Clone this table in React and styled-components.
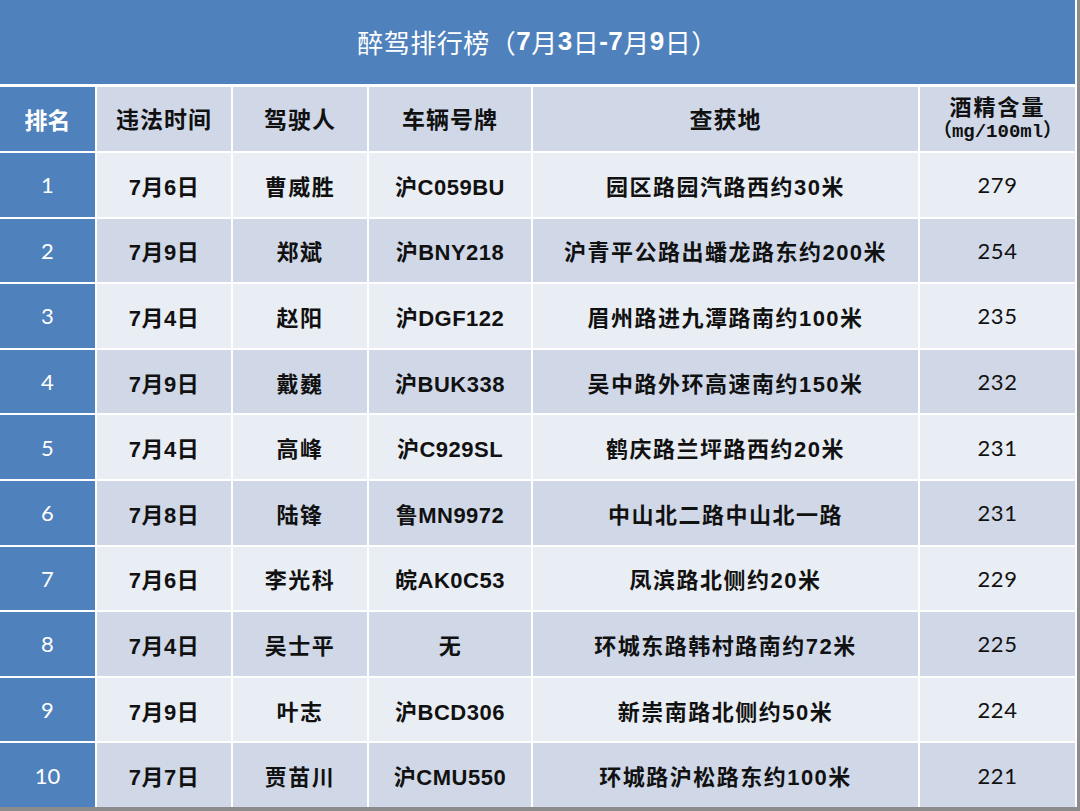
import styled, { createGlobalStyle } from "styled-components";

const GlobalStyle = createGlobalStyle`
  html, body {
    margin: 0;
    padding: 0;
    background: #8c8c8c;
  }
  body {
    font-family: "Noto Sans CJK SC", sans-serif;
  }
`;

const rows = [
  ["1", "7月6日", "曹威胜", "沪C059BU", "园区路园汽路西约30米", "279"],
  ["2", "7月9日", "郑斌", "沪BNY218", "沪青平公路出蟠龙路东约200米", "254"],
  ["3", "7月4日", "赵阳", "沪DGF122", "眉州路进九潭路南约100米", "235"],
  ["4", "7月9日", "戴巍", "沪BUK338", "吴中路外环高速南约150米", "232"],
  ["5", "7月4日", "高峰", "沪C929SL", "鹤庆路兰坪路西约20米", "231"],
  ["6", "7月8日", "陆锋", "鲁MN9972", "中山北二路中山北一路", "231"],
  ["7", "7月6日", "李光科", "皖AK0C53", "凤滨路北侧约20米", "229"],
  ["8", "7月4日", "吴士平", "无", "环城东路韩村路南约72米", "225"],
  ["9", "7月9日", "叶志", "沪BCD306", "新崇南路北侧约50米", "224"],
  ["10", "7月7日", "贾苗川", "沪CMU550", "环城路沪松路东约100米", "221"],
];

const App = () => {
  return (
    <>
      <GlobalStyle />
      <Page>
        <Board>
          <Title>
            醉驾排行榜（<Num>7</Num>月<Num>3</Num>日<Num>-7</Num>月<Num>9</Num>日）
          </Title>

          <RankCell $head>排名</RankCell>
          <HeadCell>违法时间</HeadCell>
          <HeadCell>驾驶人</HeadCell>
          <HeadCell>车辆号牌</HeadCell>
          <HeadCell>查获地</HeadCell>
          <HeadCell>
            <AlcoholTitle>酒精含量</AlcoholTitle>
            <Unit>（mg/100ml）</Unit>
          </HeadCell>

          {rows.map((r, i) => (
            <Row key={r[0]} $odd={i % 2 === 0}>
              <RankCell>{r[0]}</RankCell>
              <Cell>{r[1]}</Cell>
              <Cell $spaced>{r[2]}</Cell>
              <Cell>{r[3]}</Cell>
              <Cell $spaced>{r[4]}</Cell>
              <Cell $num>{r[5]}</Cell>
            </Row>
          ))}
        </Board>
      </Page>
    </>
  );
};

const Page = styled.div`
  width: 1080px;
  height: 811px;
  overflow: hidden;
`;

const Board = styled.div`
  width: 1077px;
  height: 807px;
  box-sizing: border-box;
  padding-right: 1px;
  display: grid;
  grid-template-columns: 95px 134px 134px 162px 385px 155px;
  grid-template-rows: 85px 64px repeat(10, 1fr);
  column-gap: 2px;
  row-gap: 2px;
  background: #ffffff;
`;

const Title = styled.div`
  grid-column: 1 / -1;
  background: #4f81bd;
  color: #ffffff;
  display: flex;
  align-items: center;
  justify-content: center;
  font-size: 26px;
  letter-spacing: 0.5px;
  padding-bottom: 1px;
  margin-bottom: 1px;
`;

const Num = styled.span`
  font-family: "Liberation Sans", "Noto Sans CJK SC", sans-serif;
  font-weight: 700;
`;

const Row = styled.div`
  display: contents;
  --cell-bg: ${(p) => (p.$odd ? "#e9edf4" : "#d0d8e8")};
`;

const RankCell = styled.div`
  background: #4f81bd;
  color: #ffffff;
  display: flex;
  align-items: center;
  justify-content: center;
  font-family: ${(p) =>
    p.$head ? '"Noto Sans CJK SC", sans-serif' : '"Lato", "Liberation Sans", sans-serif'};
  font-weight: ${(p) => (p.$head ? 700 : 400)};
  font-size: ${(p) => (p.$head ? "23px" : "22px")};
`;

const HeadCell = styled.div`
  background: #d0d8e8;
  color: #111111;
  display: flex;
  flex-direction: column;
  align-items: center;
  justify-content: center;
  font-size: 23px;
  font-weight: 700;
  line-height: 1.3;
  letter-spacing: 1px;
`;

const AlcoholTitle = styled.span`
  font-size: 22px;
  line-height: 28px;
  letter-spacing: 2px;
  margin-top: -3px;
`;

const Unit = styled.span`
  font-family: "Liberation Mono", "Noto Sans CJK SC", monospace;
  font-size: 19px;
  line-height: 26px;
  font-weight: 700;
  letter-spacing: 0px;
`;

const Cell = styled.div`
  background: var(--cell-bg);
  color: #111111;
  display: flex;
  align-items: center;
  justify-content: center;
  font-family: ${(p) =>
    p.$num
      ? '"Lato", "Liberation Sans", sans-serif'
      : '"Liberation Sans", "Noto Sans CJK SC", sans-serif'};
  font-size: 22px;
  font-weight: ${(p) => (p.$num ? 400 : 700)};
  letter-spacing: ${(p) => (p.$spaced ? "1.5px" : "0.5px")};
`;

export default App;
